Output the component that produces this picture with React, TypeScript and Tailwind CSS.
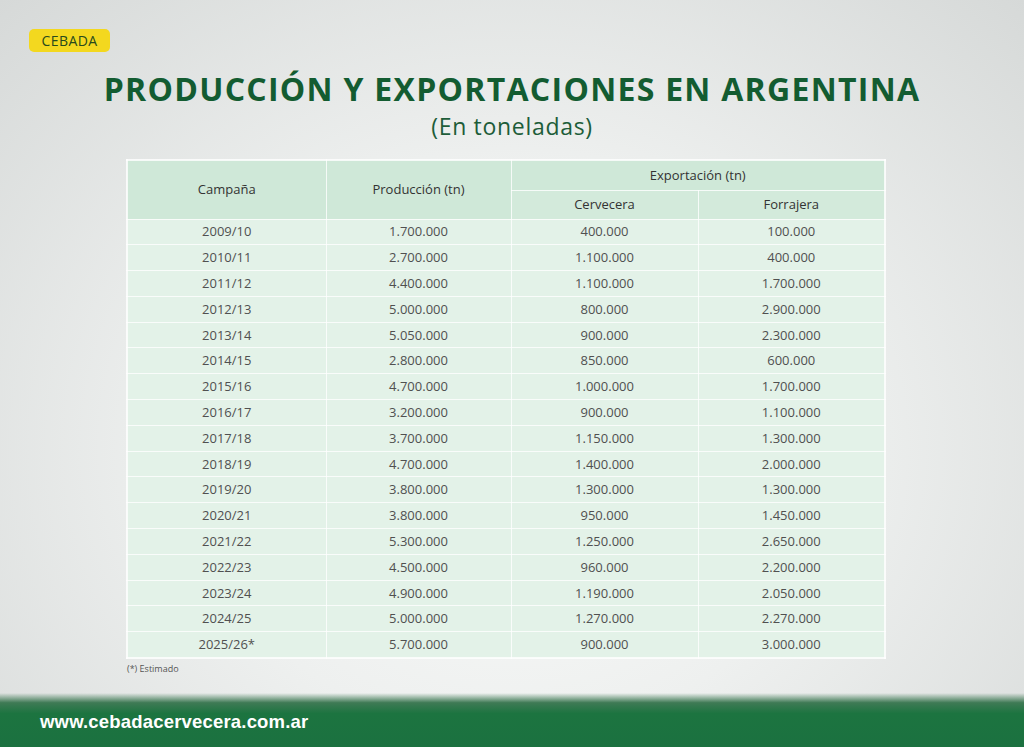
const rows: [string, string, string, string][] = [
  ["2009/10", "1.700.000", "400.000", "100.000"],
  ["2010/11", "2.700.000", "1.100.000", "400.000"],
  ["2011/12", "4.400.000", "1.100.000", "1.700.000"],
  ["2012/13", "5.000.000", "800.000", "2.900.000"],
  ["2013/14", "5.050.000", "900.000", "2.300.000"],
  ["2014/15", "2.800.000", "850.000", "600.000"],
  ["2015/16", "4.700.000", "1.000.000", "1.700.000"],
  ["2016/17", "3.200.000", "900.000", "1.100.000"],
  ["2017/18", "3.700.000", "1.150.000", "1.300.000"],
  ["2018/19", "4.700.000", "1.400.000", "2.000.000"],
  ["2019/20", "3.800.000", "1.300.000", "1.300.000"],
  ["2020/21", "3.800.000", "950.000", "1.450.000"],
  ["2021/22", "5.300.000", "1.250.000", "2.650.000"],
  ["2022/23", "4.500.000", "960.000", "2.200.000"],
  ["2023/24", "4.900.000", "1.190.000", "2.050.000"],
  ["2024/25", "5.000.000", "1.270.000", "2.270.000"],
  ["2025/26*", "5.700.000", "900.000", "3.000.000"],
];

export default function App() {
  return (
    <div className="relative w-[1024px] h-[747px] overflow-hidden flex flex-col bg-[radial-gradient(ellipse_at_50%_60%,#fbfcfb_0%,#eef0ef_45%,#d6d9d8_100%)] font-['Open_Sans',sans-serif]">
      <div className="pt-[28px] pl-[29px]">
        <span className="inline-flex items-center justify-center w-[81px] h-[23px] rounded-[5px] bg-[#f3d81f] text-[14px] text-[#284a1c] tracking-[0.03em]">
          CEBADA
        </span>
      </div>

      <h1 className="mt-[19px] text-center text-[32px] leading-[36px] font-bold tracking-[0.04em] text-[#135c31]">
        PRODUCCIÓN Y EXPORTACIONES EN ARGENTINA
      </h1>
      <p className="mt-[5px] text-center text-[23px] leading-[28px] tracking-[0.03em] text-[#1d5d39]">
        (En toneladas)
      </p>

      <div className="mt-[19px] ml-[126px]">
        <table className="border-collapse border-2 border-white/80 text-center text-[13px] text-[#505050] w-[760px]">
          <thead>
            <tr className="bg-[#cfe8d8] h-[30px] text-[#333]">
              <th rowSpan={2} className="w-[199px] font-normal border border-white/80">Campaña</th>
              <th rowSpan={2} className="w-[185px] font-normal border border-white/80">Producción (tn)</th>
              <th colSpan={2} className="font-normal border border-white/80">Exportación (tn)</th>
            </tr>
            <tr className="bg-[#d3eadb] h-[29px] text-[#333]">
              <th className="w-[187px] font-normal border border-white/80">Cervecera</th>
              <th className="w-[187px] font-normal border border-white/80">Forrajera</th>
            </tr>
          </thead>
          <tbody>
            {rows.map((r) => (
              <tr key={r[0]} className="bg-[#e3f2e8] h-[25.8px]">
                {r.map((c, i) => (
                  <td key={i} className="border border-white/80 leading-none">
                    {c}
                  </td>
                ))}
              </tr>
            ))}
          </tbody>
        </table>
        <p className="mt-[3px] ml-[1px] text-[9px] text-[#555]">(*) Estimado</p>
      </div>

      <div className="mt-auto h-[54px] bg-[linear-gradient(to_bottom,rgba(28,116,64,0)_0%,#3f7a55_18%,#1c7440_38%,#1b7140_100%)] flex items-center pl-[40px] pt-[4px]">
        <span className="font-['Liberation_Sans',sans-serif] font-bold text-[18.5px] text-white tracking-[0.01em]">
          www.cebadacervecera.com.ar
        </span>
      </div>
    </div>
  );
}
